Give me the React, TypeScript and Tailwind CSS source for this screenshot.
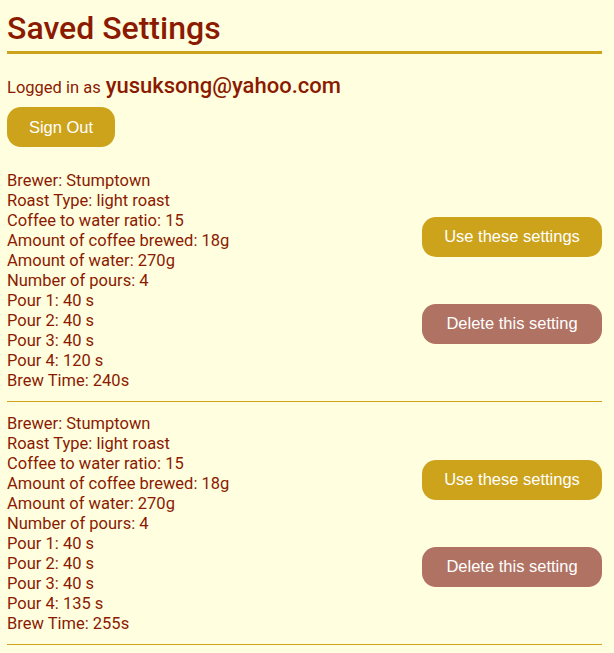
const settings = [
  { brewer: 'Stumptown', roast: 'light roast', ratio: 15, coffee: 18, water: 270, pours: [40, 40, 40, 120], brewTime: 240 },
  { brewer: 'Stumptown', roast: 'light roast', ratio: 15, coffee: 18, water: 270, pours: [40, 40, 40, 135], brewTime: 255 },
]

const App = () => {
  return (
    <div className="min-h-screen bg-[#ffffe0] pl-[7px] pr-[12px] text-[#8b1a00] font-['Roboto',sans-serif]">
      {/* Header */}
      <h1 className="pt-[10px] pb-[4px] text-[32px] leading-[37px] font-medium border-b-[3px] border-[#cca31b]">
        Saved Settings
      </h1>

      <div className="mt-[15px] h-[26px] flex items-baseline gap-[5px]">
        <span className="text-[16.5px]">Logged in as</span>
        <span className="text-[22px] font-medium">yusuksong@yahoo.com</span>
      </div>

      <button className="mt-[12px] w-[108px] h-[40px] rounded-[14px] bg-[#cca31b] text-white text-[16.5px] font-['Liberation_Sans',Arial,sans-serif]">
        Sign Out
      </button>

      {/* Saved entries */}
      <div className="mt-[24px]">
        {settings.map((s, i) => (
          <div key={i} className="flex items-center justify-between border-b border-[#cca31b] pb-[10px] mb-[12px]">
            <div className="text-[16.5px] leading-[20px]">
              <div>Brewer: {s.brewer}</div>
              <div>Roast Type: {s.roast}</div>
              <div>Coffee to water ratio: {s.ratio}</div>
              <div>Amount of coffee brewed: {s.coffee}g</div>
              <div>Amount of water: {s.water}g</div>
              <div>Number of pours: {s.pours.length}</div>
              {s.pours.map((p, j) => (
                <div key={j}>Pour {j + 1}: {p} s</div>
              ))}
              <div>Brew Time: {s.brewTime}s</div>
            </div>
            <div className="mb-[2px] flex flex-col gap-[47px] font-['Liberation_Sans',Arial,sans-serif]">
              <button className="w-[180px] h-[40px] rounded-[14px] bg-[#cca31b] text-white text-[16.5px]">
                Use these settings
              </button>
              <button className="w-[180px] h-[40px] rounded-[14px] bg-[#b07262] text-white text-[16.5px]">
                Delete this setting
              </button>
            </div>
          </div>
        ))}
      </div>
    </div>
  )
}

export default App
